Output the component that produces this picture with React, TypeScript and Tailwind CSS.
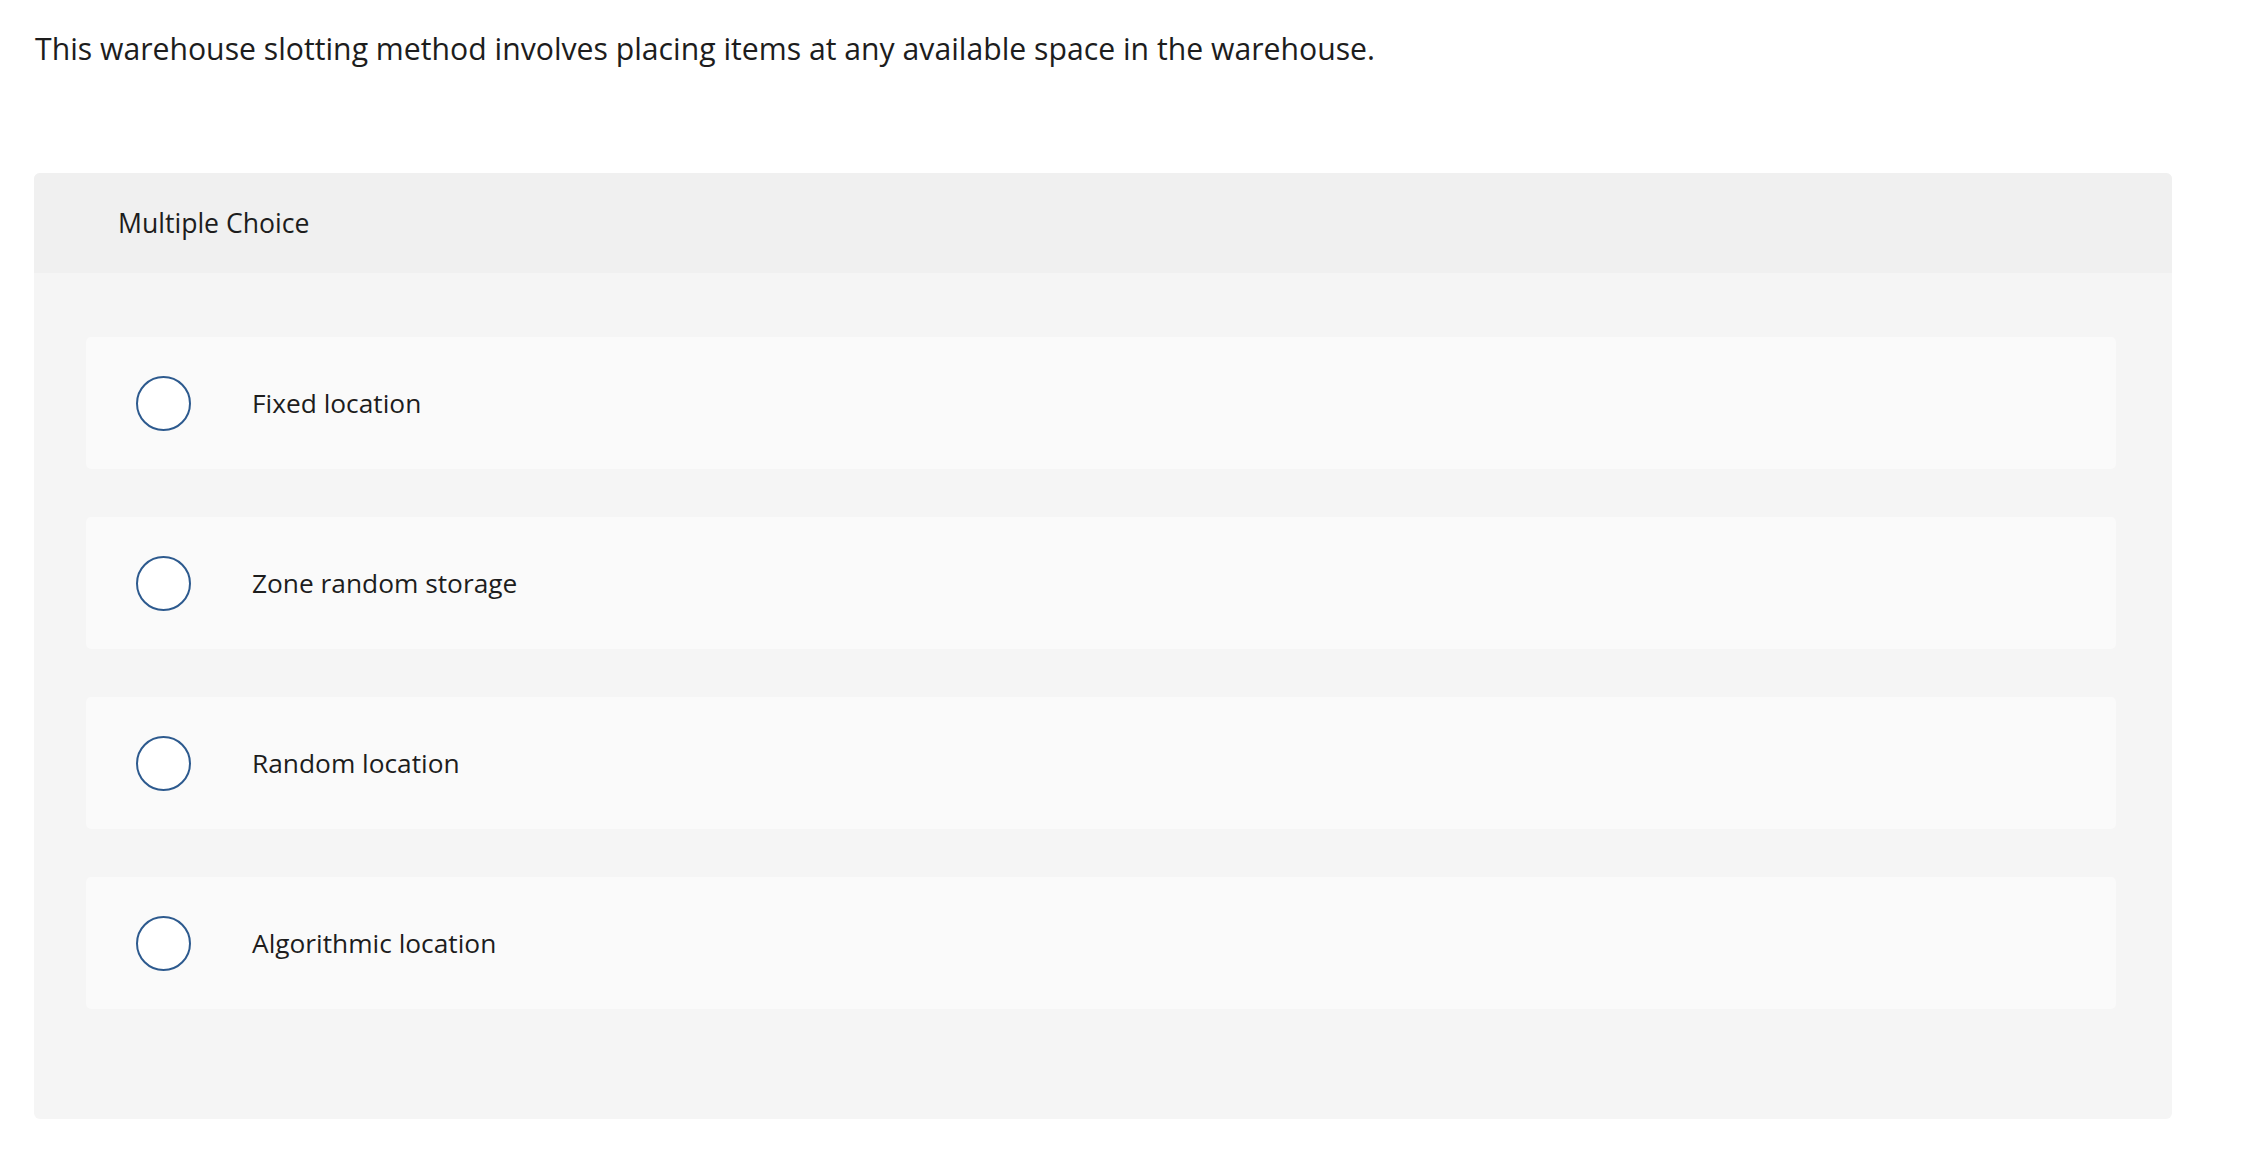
import React from "react";

const options = ["Fixed location", "Zone random storage", "Random location", "Algorithmic location"];

export default function App() {
  return (
    <div
      className="min-h-screen bg-white text-[#1d1d1d]"
      style={{ fontFamily: "'Open Sans', Lato, sans-serif" }}
    >
      <div className="pt-[29px] pl-[34px] pr-[77px]">
        <p className="text-[30.2px] leading-[40px] pl-[1px]">
          This warehouse slotting method involves placing items at any available space in the warehouse.
        </p>
        <div className="mt-[104px] rounded-[6px] bg-[#f5f5f5] overflow-hidden">
          <div className="h-[100px] bg-[#f0f0f0] flex items-center pl-[84px] pt-[2px]">
            <span className="text-[26.6px]">Multiple Choice</span>
          </div>
          <div className="pt-[64px] pb-[110px] pl-[52px] pr-[56px] flex flex-col gap-[48px]">
            {options.map((o) => (
              <div key={o} className="h-[132px] rounded-[5px] bg-[#fafafa] flex items-center pl-[50px]">
                <span className="w-[55px] h-[55px] rounded-full border-2 border-[#2d5a8e] bg-white shrink-0" />
                <span className="ml-[61px] pt-[2px] text-[26.3px]">{o}</span>
              </div>
            ))}
          </div>
        </div>
      </div>
    </div>
  );
}
